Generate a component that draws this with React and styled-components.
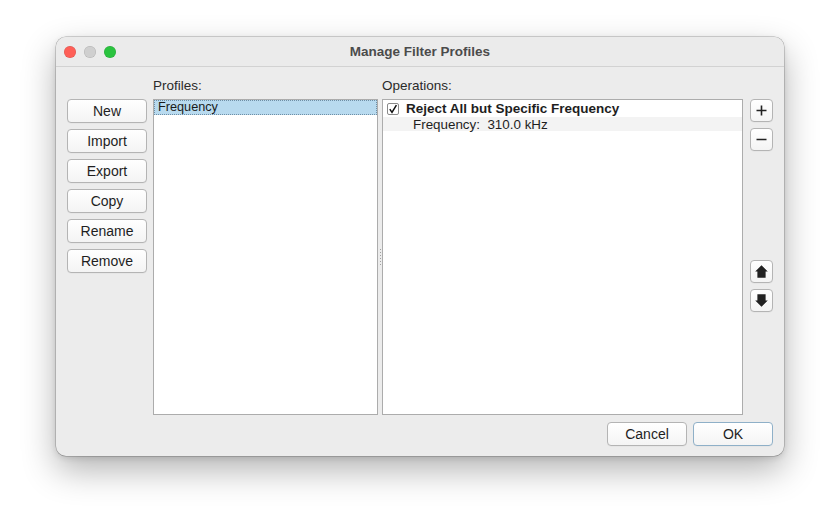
import React from "react";
import styled, { createGlobalStyle } from "styled-components";

const Global = createGlobalStyle`
  html, body { margin: 0; padding: 0; background: #ffffff; }
  body { font-family: "Liberation Sans", Arial, sans-serif; }
`;

const Desktop = styled.div`
  width: 840px;
  height: 531px;
  padding: 37px 0 0 56px;
  box-sizing: border-box;
`;

const Window = styled.div`
  width: 728px;
  height: 419px;
  background: #ececec;
  border-radius: 10px;
  box-shadow: 0 0 0 0.5px rgba(0,0,0,0.3), 0 14px 34px rgba(0,0,0,0.3), 0 2px 6px rgba(0,0,0,0.12);
  display: flex;
  flex-direction: column;
  overflow: hidden;
`;

const TitleBar = styled.div`
  height: 29px;
  flex: none;
  border-bottom: 1px solid #d2d2d2;
  background: #ebebeb;
  display: flex;
  align-items: center;
  justify-content: center;
  position: relative;
`;

const Lights = styled.div`
  position: absolute;
  left: 8px;
  top: 9px;
  display: flex;
  gap: 8px;
`;

const Light = styled.span`
  width: 12px;
  height: 12px;
  border-radius: 50%;
  background: ${p => p.$c};
  box-shadow: inset 0 0 0 0.5px rgba(0,0,0,0.15);
`;

const Title = styled.div`
  font-size: 13.5px;
  font-weight: bold;
  color: #4b4b4b;
`;

const Body = styled.div`
  flex: 1;
  display: flex;
  flex-direction: column;
  padding: 0 11px 10px 11px;
`;

const Main = styled.div`
  flex: 1;
  display: flex;
`;

const ButtonColumn = styled.div`
  width: ${p => p.$w}px;
  margin-left: ${p => p.$ml || 0}px;
  padding-top: 32px;
  display: flex;
  flex-direction: column;
  gap: 6px;
  flex: none;
`;

const Button = styled.button`
  width: ${p => p.$w || 80}px;
  height: ${p => p.$h || 24}px;
  margin-top: ${p => p.$mt || 0}px;
  padding: 0;
  box-sizing: border-box;
  border: 1px solid ${p => (p.$default ? "#8fb0c8" : "#b4b4b4")};
  border-radius: 4px;
  background: linear-gradient(#ffffff, #f4f4f4);
  font-family: "Liberation Sans", Arial, sans-serif;
  font-size: 14px;
  color: #1e1e1e;
  display: flex;
  align-items: center;
  justify-content: center;
  box-shadow: 0 0.5px 0 rgba(0,0,0,0.05);
`;

const Panel = styled.div`
  width: ${p => p.$w}px;
  margin-left: ${p => p.$ml || 0}px;
  display: flex;
  flex-direction: column;
  flex: none;
`;

const Label = styled.div`
  height: 32px;
  box-sizing: border-box;
  padding-top: 11px;
  font-size: 13.5px;
  line-height: 16px;
  color: #2a2a2a;
`;

const List = styled.div`
  flex: 1;
  background: #ffffff;
  border: 1px solid #acacac;
  overflow: hidden;
`;

const ProfileRow = styled.div`
  height: 15px;
  background: #b8daef;
  border: 1px dotted #6f8fa6;
  box-sizing: border-box;
  padding-left: 3px;
  font-size: 12.7px;
  line-height: 13px;
  color: #1a1a1a;
`;

const Splitter = styled.div`
  width: 4px;
  flex: none;
  margin-top: 32px;
  display: flex;
  flex-direction: column;
  align-items: center;
  justify-content: center;
  gap: 2px;
`;

const Dot = styled.span`
  width: 1px;
  height: 1px;
  background: #a0a0a0;
`;

const OpRow = styled.div`
  height: ${p => p.$h}px;
  display: flex;
  align-items: center;
  background: ${p => p.$bg || "transparent"};
  padding-left: ${p => p.$pl}px;
  font-size: ${p => p.$fs}px;
  font-weight: ${p => (p.$bold ? "bold" : "normal")};
  color: #1e1e1e;
  white-space: pre;
`;

const Check = styled.span`
  width: 12px;
  height: 12px;
  box-sizing: border-box;
  border: 1px solid #8a8a8a;
  border-radius: 2px;
  background: #fff;
  display: flex;
  align-items: center;
  justify-content: center;
  margin-right: 7px;
`;

const Footer = styled.div`
  display: flex;
  justify-content: flex-end;
  gap: 6px;
  margin-top: 7px;
`;

const Plus = () => (
  <svg width="11" height="11" viewBox="0 0 11 11">
    <path d="M5.5 0.5V10.5M0.5 5.5H10.5" stroke="#222" strokeWidth="1.6" />
  </svg>
);
const Minus = () => (
  <svg width="11" height="11" viewBox="0 0 11 11">
    <path d="M0.5 5.5H10.5" stroke="#222" strokeWidth="1.6" />
  </svg>
);
const Up = () => (
  <svg width="13" height="13" viewBox="0 0 12 12">
    <path d="M6 0.3L11.8 6H9.8V11.7H2.2V6H0.2Z" fill="#222" />
  </svg>
);
const Down = () => (
  <svg width="13" height="13" viewBox="0 0 12 12">
    <path d="M6 11.7L11.8 6H9.8V0.3H2.2V6H0.2Z" fill="#222" />
  </svg>
);

export default function App() {
  const left = ["New", "Import", "Export", "Copy", "Rename", "Remove"];
  return (
    <>
      <Global />
      <Desktop>
        <Window>
          <TitleBar>
            <Lights>
              <Light $c="#fe5f57" />
              <Light $c="#cfcfcf" />
              <Light $c="#2ac33f" />
            </Lights>
            <Title>Manage Filter Profiles</Title>
          </TitleBar>
          <Body>
            <Main>
              <ButtonColumn $w={80}>
                {left.map(t => (
                  <Button key={t}>{t}</Button>
                ))}
              </ButtonColumn>
              <Panel $w={225} $ml={6}>
                <Label>Profiles:</Label>
                <List>
                  <ProfileRow>Frequency</ProfileRow>
                </List>
              </Panel>
              <Splitter>
                {[0, 1, 2, 3, 4, 5].map(i => (
                  <Dot key={i} />
                ))}
              </Splitter>
              <Panel $w={361}>
                <Label>Operations:</Label>
                <List>
                  <OpRow $h={17} $pl={4} $fs={13.5} $bold>
                    <Check>
                      <svg width="10" height="10" viewBox="0 0 10 10">
                        <path d="M1.8 5.2L4 8.4L8.4 1.2" fill="none" stroke="#111" strokeWidth="1.5" />
                      </svg>
                    </Check>
                    Reject All but Specific Frequency
                  </OpRow>
                  <OpRow $h={14} $pl={30} $fs={13.4} $bg="#f3f3f3">
                    {"Frequency:  310.0 kHz"}
                  </OpRow>
                </List>
              </Panel>
              <ButtonColumn $w={23} $ml={7}>
                <Button $w={23} $h={23}><Plus /></Button>
                <Button $w={23} $h={23}><Minus /></Button>
                <Button $w={23} $h={23} $mt={103}><Up /></Button>
                <Button $w={23} $h={23}><Down /></Button>
              </ButtonColumn>
            </Main>
            <Footer>
              <Button>Cancel</Button>
              <Button $default>OK</Button>
            </Footer>
          </Body>
        </Window>
      </Desktop>
    </>
  );
}
